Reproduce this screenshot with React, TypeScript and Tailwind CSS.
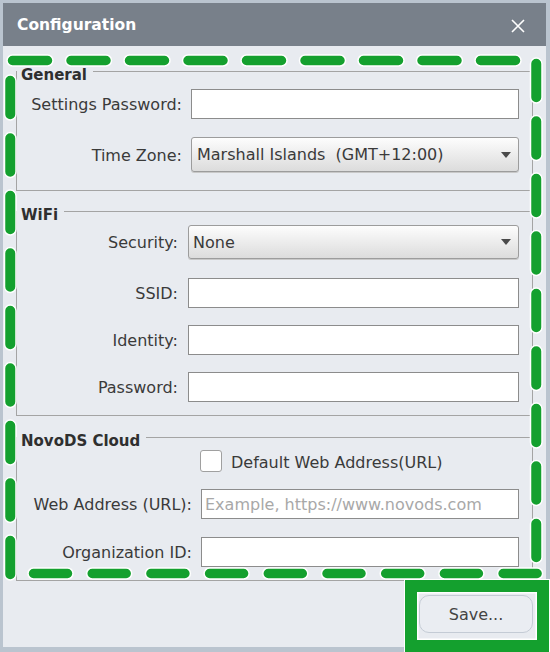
import React from "react";

const GREEN = "#14a02e";

function Dashes() {
  const rects: { x: number; y: number; w: number; h: number }[] = [];
  for (let i = 0; i < 9; i++) {
    rects.push({ x: 7 + 58.5 * i, y: 55, w: 46, h: 11 });
    rects.push({ x: 28 + 58.7 * i, y: 568, w: 45, h: 11 });
    rects.push({ x: 4.5, y: 75 + 57.5 * i, w: 11.5, h: 45 });
    rects.push({ x: 530.5, y: 58 + 57.5 * i, w: 11.5, h: 45 });
  }
  return (
    <svg
      className="pointer-events-none absolute left-0 top-0"
      width={550}
      height={652}
      viewBox="0 0 550 652"
    >
      {rects.map((r, i) => (
        <rect
          key={i}
          x={r.x}
          y={r.y}
          width={r.w}
          height={r.h}
          rx={Math.min(r.w, r.h) / 2}
          fill={GREEN}
          stroke="#ffffff"
          strokeWidth={1.5}
        />
      ))}
    </svg>
  );
}

function GroupHeader({ title }: { title: string }) {
  return (
    <div className="-mt-[8px] flex h-[20px] items-start pl-[4px]">
      <span className="mt-[2px] text-[15px] font-bold leading-[20px] text-[#2f2f2f]">{title}</span>
      <div className="ml-[6px] mt-[8px] h-px flex-1 bg-[#a4a4a4]" />
    </div>
  );
}

function TextInput({ placeholder }: { placeholder?: string }) {
  return (
    <div className="flex h-[30px] items-center border border-[#8c8c8c] bg-white pl-[3px] pt-[1px] text-[16px] text-[#a8a8a8]">
      {placeholder}
    </div>
  );
}

function Select({ value, h, pl }: { value: string; h: string; pl: string }) {
  return (
    <div
      className={`flex ${h} items-center justify-between rounded-[3px] border border-[#9c9c9c] bg-linear-to-b from-[#fdfdfd] to-[#dcdcdc] ${pl} pr-[7px] text-[16px] text-[#3a3a3a] shadow-[0_1px_0_#c8c8c8]`}
    >
      <span className="whitespace-pre pt-[1px]">{value}</span>
      <svg width="10" height="6" viewBox="0 0 10 6">
        <path d="M0 0 L10 0 L5 6 Z" fill="#4a4a4a" />
      </svg>
    </div>
  );
}

function Label({ children }: { children: React.ReactNode }) {
  return <span className="pt-[2px] text-right text-[16px] leading-[24px] text-[#3a3a3a]">{children}</span>;
}

export default function App() {
  return (
    <div className="relative h-[652px] w-[550px] overflow-hidden bg-[#bac4cf] pb-[5px] pl-[3px] pr-[4px] pt-[3px] font-['DejaVu_Sans',sans-serif]">
      <div className="flex h-full flex-col">
        {/* Title bar */}
        <div className="flex h-[43px] items-center justify-between bg-[#78808a] pl-[14px] pr-[21px] pt-[3px]">
          <span className="text-[15.5px] font-bold text-white">Configuration</span>
          <svg width="14" height="14" viewBox="0 0 14 14">
            <path d="M1 1 L13 13 M13 1 L1 13" stroke="#ffffff" strokeWidth="1.6" />
          </svg>
        </div>

        {/* Body */}
        <div className="flex flex-1 flex-col bg-[#e8ebf0]">
          {/* General */}
          <div className="ml-[13px] mr-[13px] mt-[25px] border-x border-b border-[#a4a4a4]">
            <GroupHeader title="General" />
            <div className="grid grid-cols-[165px_1fr] items-center gap-x-[9px] gap-y-[18px] pb-[18px] pr-[13px] pt-[6px]">
              <Label>Settings Password:</Label>
              <TextInput />
              <Label>Time Zone:</Label>
              <Select value="Marshall Islands  (GMT+12:00)" h="h-[35px]" pl="pl-[5px]" />
            </div>
          </div>

          {/* WiFi */}
          <div className="ml-[13px] mr-[13px] mt-[20px] border-x border-b border-[#a4a4a4]">
            <GroupHeader title="WiFi" />
            <div className="grid grid-cols-[161px_1fr] items-center gap-x-[10px] pb-[13px] pr-[13px] pt-[2px]">
              <Label>Security:</Label>
              <Select value="None" h="h-[34px]" pl="pl-[4px]" />
              <div className="col-span-2 h-[19px]" />
              <Label>SSID:</Label>
              <TextInput />
              <div className="col-span-2 h-[17px]" />
              <Label>Identity:</Label>
              <TextInput />
              <div className="col-span-2 h-[17px]" />
              <Label>Password:</Label>
              <TextInput />
            </div>
          </div>

          {/* NovoDS Cloud */}
          <div className="ml-[13px] mr-[13px] mt-[21px] border-x border-b border-[#a4a4a4]">
            <GroupHeader title="NovoDS Cloud" />
            <div className="grid grid-cols-[175px_1fr] items-center gap-x-[9px] pb-[13px] pr-[13px] pt-[1px]">
              <div />
              <div className="-ml-[1px] flex h-[22px] items-center gap-[9px]">
                <div className="h-[22px] w-[22px] shrink-0 rounded-[3px] border border-[#a0a0a0] bg-white" />
                <span className="pt-[3px] text-[16px] leading-[22px] text-[#3a3a3a]">Default Web Address(URL)</span>
              </div>
              <div className="col-span-2 h-[17px]" />
              <Label>Web Address (URL):</Label>
              <TextInput placeholder="Example, https://www.novods.com" />
              <div className="col-span-2 h-[18px]" />
              <Label>Organization ID:</Label>
              <TextInput />
            </div>
          </div>

          {/* Footer */}
          <div className="mt-[14px] flex justify-end pr-[13px]">
            <button className="flex h-[38px] w-[114px] items-center justify-center rounded-[10px] border border-[#c4cbd5] bg-[#eaedf2] pt-[1px] text-[16px] text-[#444444]">
              Save...
            </button>
          </div>
        </div>
      </div>

      <Dashes />
      <div className="pointer-events-none absolute left-[405px] top-[580px] h-[72px] w-[144px] border-[12px] border-[#14a02e] shadow-[inset_0_0_0_1.5px_#ffffff] outline outline-1 outline-white" />
    </div>
  );
}
